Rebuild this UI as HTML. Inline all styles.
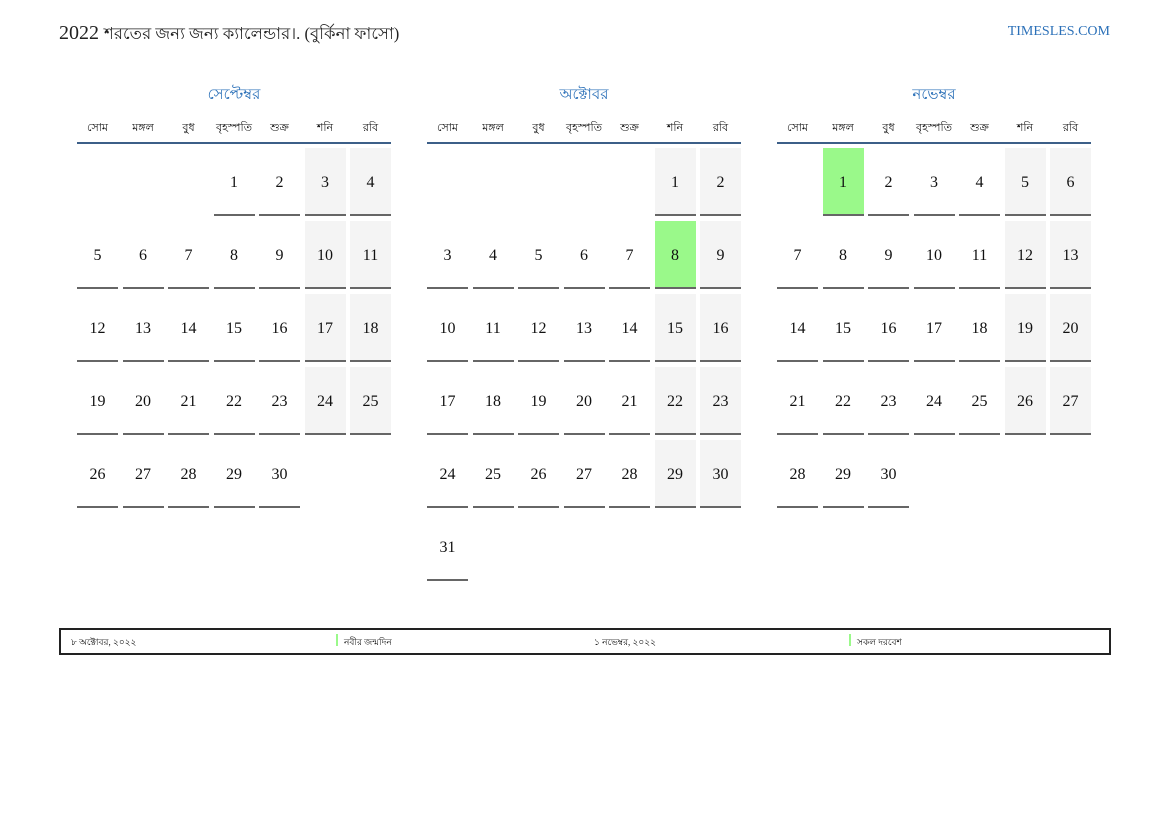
<!DOCTYPE html>
<html><head><meta charset="utf-8">
<style>
*{margin:0;padding:0;box-sizing:border-box}
body{width:1169px;height:827px;background:#fff;position:relative;font-family:"Liberation Serif",serif;color:#111;overflow:hidden}
.title{position:absolute;left:59px;top:22px;font-size:20px;color:#222;white-space:nowrap}
.title b{font-weight:normal;font-size:16.6px}
.site{position:absolute;right:59px;top:24px;font-size:14px;color:#2b70b8}
.m{position:absolute;top:85px;width:314px}
.mt{text-align:center;color:#2b70b8;font-size:15px;height:20px;line-height:20px}
.hd{display:grid;grid-template-columns:repeat(7,41px);column-gap:4.5px;margin-top:12px;height:27px;border-bottom:2px solid #3c5f88;font-size:11px}
.hd div{text-align:center;line-height:22px}
.g{display:grid;grid-template-columns:repeat(7,41px);column-gap:4.5px;row-gap:5px;margin-top:4px}
.g div{height:68px;line-height:70px;text-align:center;font-size:16px;border-bottom:2px solid #666}
.g .w{background:#f4f4f4}
.g .k{background:#9af98a}
.g .e{border-bottom:none}
.foot{position:absolute;left:59px;top:628px;width:1052px;height:27px;border:2px solid #222;font-size:9px}
.foot span{position:absolute;top:5px}
.bar{position:absolute;top:4px;width:2px;height:12px;background:#9af98a}
</style></head><body>
<div class="title">2022 <b>শরতের জন্য জন্য ক্যালেন্ডার।. (বুর্কিনা ফাসো)</b></div>
<div class="site">TIMESLES.COM</div>

<div class="m" style="left:77px">
<div class="mt">সেপ্টেম্বর</div>
<div class="hd"><div>সোম</div><div>মঙ্গল</div><div>বুধ</div><div>বৃহস্পতি</div><div>শুক্র</div><div>শনি</div><div>রবি</div></div>
<div class="g">
<div class="e"></div><div class="e"></div><div class="e"></div><div>1</div><div>2</div><div class="w">3</div><div class="w">4</div>
<div>5</div><div>6</div><div>7</div><div>8</div><div>9</div><div class="w">10</div><div class="w">11</div>
<div>12</div><div>13</div><div>14</div><div>15</div><div>16</div><div class="w">17</div><div class="w">18</div>
<div>19</div><div>20</div><div>21</div><div>22</div><div>23</div><div class="w">24</div><div class="w">25</div>
<div>26</div><div>27</div><div>28</div><div>29</div><div>30</div>
</div></div>

<div class="m" style="left:427px">
<div class="mt">অক্টোবর</div>
<div class="hd"><div>সোম</div><div>মঙ্গল</div><div>বুধ</div><div>বৃহস্পতি</div><div>শুক্র</div><div>শনি</div><div>রবি</div></div>
<div class="g">
<div class="e"></div><div class="e"></div><div class="e"></div><div class="e"></div><div class="e"></div><div class="w">1</div><div class="w">2</div>
<div>3</div><div>4</div><div>5</div><div>6</div><div>7</div><div class="k">8</div><div class="w">9</div>
<div>10</div><div>11</div><div>12</div><div>13</div><div>14</div><div class="w">15</div><div class="w">16</div>
<div>17</div><div>18</div><div>19</div><div>20</div><div>21</div><div class="w">22</div><div class="w">23</div>
<div>24</div><div>25</div><div>26</div><div>27</div><div>28</div><div class="w">29</div><div class="w">30</div>
<div>31</div>
</div></div>

<div class="m" style="left:777px">
<div class="mt">নভেম্বর</div>
<div class="hd"><div>সোম</div><div>মঙ্গল</div><div>বুধ</div><div>বৃহস্পতি</div><div>শুক্র</div><div>শনি</div><div>রবি</div></div>
<div class="g">
<div class="e"></div><div class="k">1</div><div>2</div><div>3</div><div>4</div><div class="w">5</div><div class="w">6</div>
<div>7</div><div>8</div><div>9</div><div>10</div><div>11</div><div class="w">12</div><div class="w">13</div>
<div>14</div><div>15</div><div>16</div><div>17</div><div>18</div><div class="w">19</div><div class="w">20</div>
<div>21</div><div>22</div><div>23</div><div>24</div><div>25</div><div class="w">26</div><div class="w">27</div>
<div>28</div><div>29</div><div>30</div>
</div></div>

<div class="foot">
<span style="left:10px">৮ অক্টোবর, ২০২২</span>
<div class="bar" style="left:275px"></div><span style="left:283px">নবীর জন্মদিন</span>
<span style="left:533px">১ নভেম্বর, ২০২২</span>
<div class="bar" style="left:788px"></div><span style="left:796px">সকল দরবেশ</span>
</div>
</body></html>
